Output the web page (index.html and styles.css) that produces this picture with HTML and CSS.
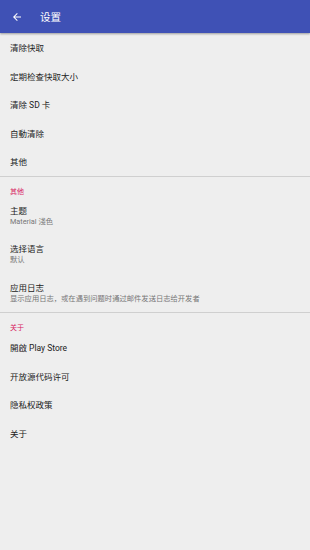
FILE: index.html
```html
<!DOCTYPE html>
<html lang="zh">
<head>
<meta charset="utf-8">
<link rel="stylesheet" href="styles.css">
</head>
<body>
<header class="bar">
  <svg class="back" width="12" height="12" viewBox="0 0 24 24"><path d="M20 11H7.83l5.59-5.59L12 4l-8 8 8 8 1.41-1.41L7.83 13H20v-2z" fill="#fff"/></svg>
  <span class="title">设置</span>
</header>
<main>
  <section class="group">
    <div class="item">清除快取</div>
    <div class="item">定期检查快取大小</div>
    <div class="item">清除 SD 卡</div>
    <div class="item">自動清除</div>
    <div class="item">其他</div>
  </section>
  <section class="group">
    <div class="cat">其他</div>
    <div class="item two"><div class="t">主题</div><div class="s">Material 淺色</div></div>
    <div class="item two"><div class="t">选择语言</div><div class="s">默认</div></div>
    <div class="item two"><div class="t">应用日志</div><div class="s">显示应用日志，或在遇到问题时通过邮件发送日志给开发者</div></div>
  </section>
  <section class="group last">
    <div class="cat">关于</div>
    <div class="item">開啟 Play Store</div>
    <div class="item">开放源代码许可</div>
    <div class="item">隐私权政策</div>
    <div class="item">关于</div>
  </section>
</main>
</body>
</html>
```
FILE: styles.css
```css
html, body { margin: 0; padding: 0; }
body {
  width: 310px;
  height: 550px;
  background: #eeeeee;
  font-family: Roboto, "Noto Sans CJK SC", sans-serif;
  color: #212121;
  overflow: hidden;
}
.bar {
  height: 33px;
  background: #3f51b5;
  display: flex;
  align-items: center;
  box-shadow: 0 1px 2px rgba(0,0,0,0.35);
  position: relative;
}
.back { margin-left: 11px; }
.title {
  margin-left: 17px;
  color: #fff;
  font-size: 10.5px;
}
.group { border-bottom: 1px solid #cfcfcf; }
.group.last { border-bottom: none; }
.item {
  height: 28.5px;
  display: flex;
  flex-direction: column;
  justify-content: center;
  padding-left: 10px;
  font-size: 8.5px;
  color: #222;
}
.item.two { height: 38.5px; }
.t { font-size: 8.5px; line-height: 11px; }
.s { font-size: 7.3px; line-height: 9px; color: #777; }
.cat {
  height: 20px;
  box-sizing: border-box;
  padding: 10px 0 0 10px;
  font-size: 7px;
  line-height: 10px;
  color: #d81b60;
}
```
